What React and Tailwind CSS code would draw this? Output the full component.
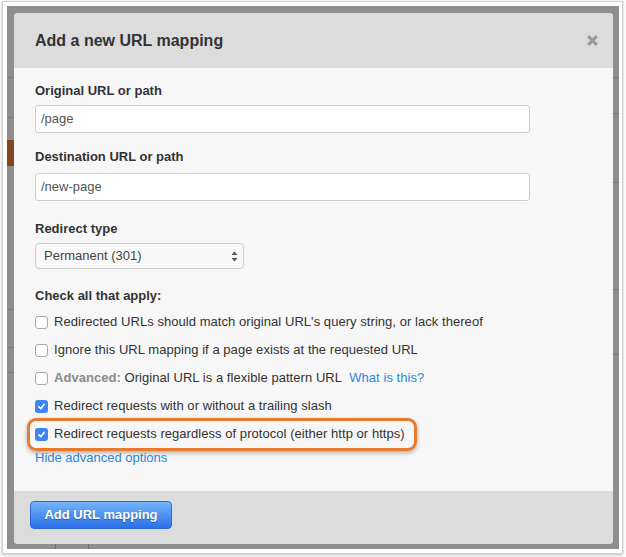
import { useState } from "react";

const font = { fontFamily: '"Liberation Sans", Arial, sans-serif' };

const CheckBox = ({ checked }) =>
  checked ? (
    <span className="w-[13px] h-[13px] rounded-[3px] bg-[#3b86f0] flex items-center justify-center shrink-0">
      <svg width="9" height="9" viewBox="0 0 10 10">
        <path d="M2 5.3 L4.2 7.4 L8 2.6" fill="none" stroke="white" strokeWidth="1.8" strokeLinecap="round" strokeLinejoin="round" />
      </svg>
    </span>
  ) : (
    <span className="w-[13px] h-[13px] rounded-[3px] bg-white border border-[#a9a9a9] shrink-0" />
  );

const Row = ({ checked, children }) => (
  <div className="flex items-center gap-[6px] h-[16px] text-[13px] text-[#333] tracking-[0.05px]">
    <CheckBox checked={checked} />
    <span className="whitespace-nowrap">{children}</span>
  </div>
);

const App = () => {
  const [type] = useState("Permanent (301)");

  return (
    <div className="w-[626px] h-[557px] bg-white pl-[2px] pt-[1px]" style={font}>
      <div className="w-[621px] h-[553px] border border-[#cfcfcf] shadow-[0_1px_3px_rgba(0,0,0,0.25)] bg-white pl-[4px] pt-[4px]">
        <div className="relative w-[612px] h-[543px] bg-[#8e8e8e] pl-[7px] pt-[7px]">
          {/* page behind the overlay */}
          <div className="absolute left-0 top-[71px] w-[7px] h-px bg-[#7a7a7a]" />
          <div className="absolute left-0 top-[111px] w-[7px] h-px bg-[#7a7a7a]" />
          <div className="absolute left-0 top-[134px] w-[7px] h-[26px] bg-[#80461f]" />
          <div className="absolute left-0 top-[303px] w-[7px] h-px bg-[#7a7a7a]" />
          <div className="absolute left-0 top-[341px] w-[7px] h-px bg-[#7a7a7a]" />
          <div className="absolute left-0 top-[366px] w-[7px] h-px bg-[#7a7a7a]" />
          <div className="absolute right-0 top-[71px] w-[6px] h-px bg-[#7a7a7a]" />
          <div className="absolute right-0 top-[107px] w-[6px] h-px bg-[#7a7a7a]" />
          <div className="absolute right-0 top-[176px] w-[6px] h-px bg-[#7a7a7a]" />
          <div className="absolute right-0 top-[283px] w-[6px] h-px bg-[#7a7a7a]" />
          <div className="absolute right-0 top-[348px] w-[6px] h-px bg-[#7a7a7a]" />
          <div className="absolute left-[48px] bottom-0 w-[34px] h-[5px] border-x border-[#6e6e6e]" />

          <div className="relative w-[599px] h-[531px] rounded-[4px] overflow-hidden bg-[#f7f7f7] flex flex-col">
            <div className="h-[55px] bg-[#dcdcdc] flex items-center justify-between pl-[21px] pr-[14px]">
              <h2 className="text-[16px] font-bold text-[#333]">Add a new URL mapping</h2>
              <svg width="13" height="13" viewBox="0 0 12 12">
                <path d="M2 2 L10 10 M10 2 L2 10" stroke="#9a9a9a" strokeWidth="3" strokeLinecap="butt" />
              </svg>
            </div>

            <div className="flex-1 pl-[21px] pt-[15px]">
              <label className="block text-[13px] font-bold text-[#333] leading-[16px]">Original URL or path</label>
              <div className="mt-[6px] w-[495px] h-[28px] bg-white border border-[#cdcdcd] rounded-[3px] flex items-center px-[5px] text-[13px] text-[#555]">/page</div>

              <label className="block mt-[16px] text-[13px] font-bold text-[#333] leading-[16px]">Destination URL or path</label>
              <div className="mt-[8px] w-[495px] h-[28px] bg-white border border-[#cdcdcd] rounded-[3px] flex items-center px-[5px] text-[13px] text-[#555]">/new-page</div>

              <label className="block mt-[20px] text-[13px] font-bold text-[#333] leading-[16px]">Redirect type</label>
              <div className="mt-[6px] w-[209px] h-[26px] bg-[#f8f8f8] border border-[#cdcdcd] rounded-[4px] flex items-center justify-between pl-[8px] pr-[5px] text-[13px] text-[#444]">
                <span>{type}</span>
                <svg width="7" height="11" viewBox="0 0 7 11">
                  <path d="M3.5 0.5 L6.5 4 L0.5 4 Z M3.5 10.5 L6.5 7 L0.5 7 Z" fill="#555" />
                </svg>
              </div>

              <div className="mt-[19px] text-[13px] font-bold text-[#333] leading-[16px]">Check all that apply:</div>

              <div className="mt-[10px] flex flex-col gap-[12px]">
                <Row>Redirected URLs should match original URL's query string, or lack thereof</Row>
                <Row>Ignore this URL mapping if a page exists at the requested URL</Row>
                <Row>
                  <span className="font-bold text-[#8a8a8a]">Advanced:</span> Original URL is a flexible pattern URL{" "}
                  <a className="ml-[4px] text-[#2b87e3]">What is this?</a>
                </Row>
                <Row checked>Redirect requests with or without a trailing slash</Row>
                <div className="relative">
                  <div className="absolute left-[-8px] top-[-8px] w-[390px] h-[33px] border-[3px] border-[#e87a2c] rounded-[9px] shadow-[0_2px_4px_rgba(0,0,0,0.3)]" />
                  <Row checked>Redirect requests regardless of protocol (either http or https)</Row>
                </div>
              </div>

              <a className="block mt-[8px] text-[13px] text-[#2b87e3] leading-[16px]">Hide advanced options</a>
            </div>

            <div className="h-[53px] bg-[#dcdcdc] pl-[16px] pt-[10px]">
              <button className="w-[142px] h-[28px] rounded-[4px] border border-[#2e6ad8] bg-gradient-to-b from-[#72b4f7] to-[#2c70ec] text-white text-[13px] font-bold [text-shadow:0_1px_1px_rgba(0,0,0,0.35)]">
                Add URL mapping
              </button>
            </div>
          </div>
        </div>
      </div>
    </div>
  );
};

export default App;
